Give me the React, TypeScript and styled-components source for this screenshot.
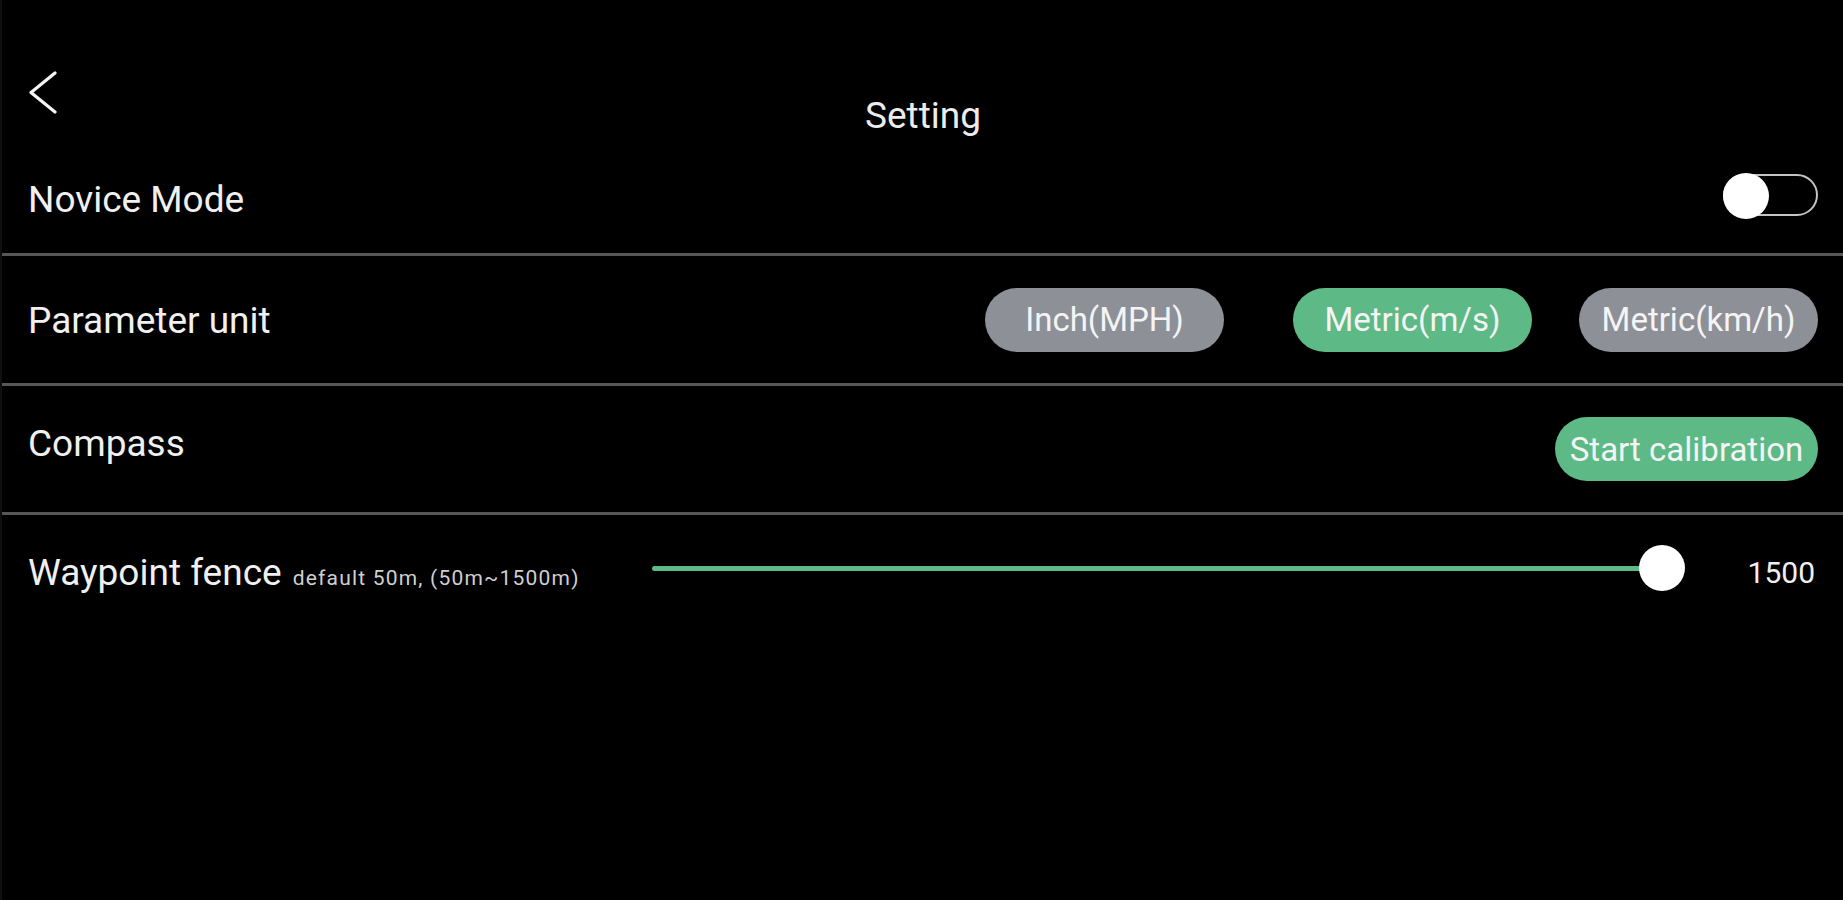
import React from "react";
import styled, { createGlobalStyle } from "styled-components";

const GREEN = "#5dba86";
const GRAY_PILL = "#8e9098";
const DIVIDER = "#575757";

const Global = createGlobalStyle`
  html, body {
    margin: 0;
    padding: 0;
    background: #000;
  }
  body {
    font-family: Roboto, "Noto Sans", "Liberation Sans", sans-serif;
    color: #f0f0f0;
  }
`;

const Page = styled.div`
  width: 1843px;
  height: 900px;
  background: #000;
  box-sizing: border-box;
  border-left: 2px solid #101010;
  display: flex;
  flex-direction: column;
  overflow: hidden;
`;

const Header = styled.header`
  height: 140px;
  display: grid;
  grid-template-columns: 1fr auto 1fr;
  align-items: start;
  padding: 0 25px 0 26px;
`;

const BackButton = styled.button`
  justify-self: start;
  margin-top: 71px;
  padding: 0;
  border: none;
  background: transparent;
  width: 32px;
  height: 44px;
  cursor: pointer;
  display: flex;
`;

const Title = styled.h1`
  margin: 96px 0 0;
  font-size: 37px;
  line-height: 40px;
  font-weight: 400;
  color: #ececec;
`;

const Row = styled.div<{ $h: number; $divider?: boolean }>`
  height: ${(p) => p.$h}px;
  display: flex;
  align-items: center;
  justify-content: space-between;
  padding: 0 25px 0 26px;
  border-bottom: ${(p) => (p.$divider ? `3px solid ${DIVIDER}` : "none")};
  flex-shrink: 0;
`;

const Label = styled.span<{ $size?: number; $shift?: number }>`
  font-size: ${(p) => p.$size ?? 37}px;
  line-height: 1;
  color: #f0f0f0;
  position: relative;
  top: ${(p) => p.$shift ?? 0}px;
`;

const Toggle = styled.div`
  position: relative;
  width: 95px;
  height: 42px;
  box-sizing: border-box;
  border: 2px solid #c4c4c4;
  border-radius: 21px;
  margin-top: -4px;
`;

const ToggleKnob = styled.div`
  position: absolute;
  left: -2px;
  top: -3px;
  width: 46px;
  height: 46px;
  border-radius: 50%;
  background: #fff;
`;

const PillGroup = styled.div`
  display: flex;
  align-items: center;
`;

const Pill = styled.button<{ $active?: boolean; $w: number; $before?: number }>`
  width: ${(p) => p.$w}px;
  height: 64px;
  margin-left: ${(p) => p.$before ?? 0}px;
  border: none;
  border-radius: 32px;
  background: ${(p) => (p.$active ? GREEN : GRAY_PILL)};
  color: #f4f4f4;
  font-family: Roboto, "Noto Sans", "Liberation Sans", sans-serif;
  font-size: 33px;
  line-height: 1;
  padding: 0;
  display: flex;
  align-items: center;
  justify-content: center;
  white-space: nowrap;
  cursor: pointer;
`;

const FenceLabel = styled.div`
  width: 624px;
  display: flex;
  align-items: baseline;
  gap: 11px;
  flex-shrink: 0;
  position: relative;
  top: 4px;
`;

const Hint = styled.span`
  font-size: 21px;
  letter-spacing: 1.2px;
  color: #cfcfcf;
`;

const Slider = styled.div`
  position: relative;
  flex: 1;
  height: 46px;
  display: flex;
  align-items: center;
`;

const Track = styled.div`
  height: 5px;
  border-radius: 3px;
  background: ${GREEN};
`;

const SliderKnob = styled.div`
  position: absolute;
  top: 0;
  width: 46px;
  height: 46px;
  border-radius: 50%;
  background: #fff;
  transform: translateX(-50%);
`;

const Value = styled.span`
  width: 133px;
  flex-shrink: 0;
  text-align: right;
  font-size: 30px;
  line-height: 1;
  color: #f0f0f0;
  padding-right: 3px;
  box-sizing: border-box;
  position: relative;
  top: 5px;
`;

const fence = { min: 50, max: 1500, value: 1500 };

export default function App() {
  const pct = ((fence.value - fence.min) / (fence.max - fence.min)) * 100;
  return (
    <>
      <Global />
      <Page>
        <Header>
          <BackButton aria-label="Back">
            <svg width="32" height="44" viewBox="0 0 32 44" fill="none">
              <polyline
                points="27,2 3,21.5 27,41"
                stroke="#f4f4f4"
                strokeWidth="3.2"
                strokeLinecap="round"
                strokeLinejoin="round"
              />
            </svg>
          </BackButton>
          <Title>Setting</Title>
          <div />
        </Header>

        <Row $h={113} $divider>
          <Label $shift={3}>Novice Mode</Label>
          <Toggle>
            <ToggleKnob />
          </Toggle>
        </Row>

        <Row $h={127} $divider>
          <Label $shift={1}>Parameter unit</Label>
          <PillGroup>
            <Pill $w={239}>Inch(MPH)</Pill>
            <Pill $w={239} $active $before={69}>
              Metric(m/s)
            </Pill>
            <Pill $w={239} $before={47}>
              Metric(km/h)
            </Pill>
          </PillGroup>
        </Row>

        <Row $h={126} $divider>
          <Label $shift={-6}>Compass</Label>
          <Pill $w={263} $active>
            Start calibration
          </Pill>
        </Row>

        <Row $h={106}>
          <FenceLabel>
            <Label>Waypoint fence</Label>
            <Hint>default 50m, (50m~1500m)</Hint>
          </FenceLabel>
          <Slider>
            <Track style={{ width: `calc(${pct}% - 23px)` }} />
            <SliderKnob style={{ left: `calc(${pct}% - 23px)` }} />
          </Slider>
          <Value>{fence.value}</Value>
        </Row>
      </Page>
    </>
  );
}
